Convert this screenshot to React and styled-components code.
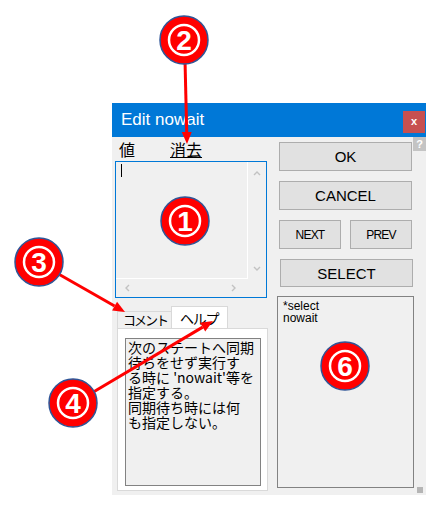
import React from "react";
import styled, { createGlobalStyle } from "styled-components";

const GlobalStyle = createGlobalStyle`
  body {
    margin: 0;
    background: #fff;
    font-family: "Liberation Sans", Arial, sans-serif;
  }
`;

const Stage = styled.div`
  position: relative;
  width: 446px;
  height: 516px;
  padding: 103px 0 0 112px;
  box-sizing: border-box;
  overflow: hidden;
`;

const Window = styled.div`
  width: 314px;
`;

const TitleBar = styled.div`
  height: 34px;
  background: #0078d7;
  display: flex;
  justify-content: space-between;
  padding-left: 9px;
  box-sizing: border-box;
`;

const Title = styled.div`
  color: #fff;
  font-size: 17px;
  line-height: 34px;
`;

const CloseButton = styled.div`
  width: 22px;
  height: 22px;
  margin: 8px 1px 0 0;
  background: #c75050;
  color: #fff;
  font: bold 11px/20px "Liberation Sans", Arial, sans-serif;
  text-align: center;
`;

const Body = styled.div`
  position: relative;
  height: 358px;
  background: #f0f0f0;
  display: flex;
  padding-left: 3px;
  box-sizing: border-box;
`;

const HelpBox = styled.div`
  position: absolute;
  top: 0;
  right: 0;
  width: 13px;
  height: 14px;
  background: #c4c4c4;
  color: #fff;
  font: bold 11px/14px "Liberation Sans", Arial, sans-serif;
  text-align: center;
`;

const Grip = styled.div`
  position: absolute;
  right: 3px;
  bottom: 2px;
  width: 6px;
  height: 6px;
  background-image: radial-gradient(#b5b5b5 0.8px, transparent 1px);
  background-size: 2px 2px;
`;

const LeftColumn = styled.div`
  width: 153px;
  display: flex;
  flex-direction: column;
`;

const LabelRow = styled.div`
  height: 24px;
  display: flex;
  align-items: center;
  padding-left: 4px;
  font: 16px "Noto Sans CJK JP", sans-serif;
  color: #000;
`;

const LinkLabel = styled.span`
  margin-left: 35px;
  text-decoration: underline;
  text-underline-offset: 1px;
`;

const TextBox = styled.div`
  width: 152px;
  height: 137px;
  border: 1px solid #0078d7;
  box-sizing: border-box;
  display: grid;
  grid-template-columns: 1fr 18px;
  grid-template-rows: 1fr 18px;
  background: #f0f0f0;
`;

const EditArea = styled.div`
  border-right: 1px solid #fff;
  border-bottom: 1px solid #fff;
  padding: 2px 0 0 5px;
`;

const Caret = styled.div`
  width: 1px;
  height: 13px;
  background: #000;
`;

const VScroll = styled.div`
  display: flex;
  flex-direction: column;
  justify-content: space-between;
  align-items: center;
  padding: 8px 0 6px;
`;

const HScroll = styled.div`
  display: flex;
  justify-content: space-between;
  align-items: center;
  padding: 0 10px 0 8px;
`;

const Chevron = ({ dir }) => {
  const pts = {
    up: "1,5 4,2 7,5",
    down: "1,2 4,5 7,2",
    left: "5,1 2,4 5,7",
    right: "2,1 5,4 2,7",
  }[dir];
  return (
    <svg width="8" height="8" viewBox="0 0 8 8">
      <polyline points={pts} fill="none" stroke="#c2c2c2" strokeWidth="1.4" />
    </svg>
  );
};

const Tabs = styled.div`
  margin: 8px 0 0 2px;
  height: 22px;
  display: flex;
  align-items: flex-end;
`;

const Tab = styled.div`
  height: ${(p) => (p.$active ? 22 : 17)}px;
  padding: 0 ${(p) => (p.$active ? 9 : 4)}px 0 ${(p) => (p.$active ? 8 : 5)}px;
  background: ${(p) => (p.$active ? "#fff" : "#f0f0f0")};
  border: 1px solid #d9d9d9;
  border-bottom: none;
  box-sizing: border-box;
  font: ${(p) => (p.$active ? 14 : 13)}px "Noto Sans CJK JP", sans-serif;
  letter-spacing: ${(p) => (p.$active ? -1.3 : -2)}px;
  line-height: ${(p) => (p.$active ? 22 : 16)}px;
  color: #000;
  margin-left: ${(p) => (p.$active ? -1 : 0)}px;
`;

const TabPanel = styled.div`
  margin-left: 2px;
  width: 151px;
  height: 163px;
  background: #fff;
  border: 1px solid #d9d9d9;
  border-top-color: #d9d9d9;
  box-sizing: border-box;
  padding: 9px 6px 4px 7px;
`;

const HelpText = styled.div`
  height: 100%;
  border: 1px solid #828282;
  background: #f0f0f0;
  box-sizing: border-box;
  padding: 1px 0 0 2px;
  font: 14px/15px "Noto Sans CJK JP", sans-serif;
  color: #000;
  white-space: nowrap;
  overflow: hidden;
`;

const RightColumn = styled.div`
  margin-left: 9px;
  width: 137px;
  display: flex;
  flex-direction: column;
`;

const Button = styled.div`
  width: ${(p) => p.$w || 133}px;
  height: ${(p) => p.$h || 29}px;
  margin-left: ${(p) => p.$ml ?? 2}px;
  margin-top: ${(p) => p.$mt ?? 10}px;
  background: #e1e1e1;
  border: 1px solid #adadad;
  box-sizing: border-box;
  display: flex;
  align-items: center;
  justify-content: center;
  font-size: ${(p) => (p.$small ? 12 : 15)}px;
  letter-spacing: ${(p) => (p.$small ? -0.8 : 0)}px;
  color: #000;
`;

const ButtonRow = styled.div`
  display: flex;
  gap: 9px;
  margin-left: 2px;
  margin-top: 10px;
`;

const ListBox = styled.div`
  margin-top: 9px;
  width: 137px;
  height: 192px;
  border: 1px solid #828282;
  background: #f0f0f0;
  box-sizing: border-box;
  padding: 3px 0 0 5px;
  font-size: 12px;
  line-height: 12px;
  color: #000;
`;

const Overlay = styled.svg`
  position: absolute;
  left: 0;
  top: 0;
  pointer-events: none;
`;

const RED = "#ff0000";

function Arrow({ x1, y1, x2, y2 }) {
  const a = Math.atan2(y2 - y1, x2 - x1);
  const len = 12;
  const half = 5;
  const bx = x2 - len * Math.cos(a);
  const by = y2 - len * Math.sin(a);
  const px = -Math.sin(a) * half;
  const py = Math.cos(a) * half;
  return (
    <g>
      <line x1={x1} y1={y1} x2={bx} y2={by} stroke={RED} strokeWidth="3" />
      <polygon
        points={`${x2},${y2} ${bx + px},${by + py} ${bx - px},${by - py}`}
        fill={RED}
      />
    </g>
  );
}

function Marker({ cx, cy, n }) {
  return (
    <g>
      <circle cx={cx} cy={cy} r="24" fill={RED} stroke="#2f5597" strokeWidth="1.5" />
      <circle cx={cx} cy={cy} r="15" fill="none" stroke="#fff" strokeWidth="2.5" />
      <text
        x={cx}
        y={cy + 10}
        textAnchor="middle"
        fill="#fff"
        fontFamily="Liberation Sans, Arial, sans-serif"
        fontWeight="bold"
        fontSize="28"
      >
        {n}
      </text>
    </g>
  );
}

const helpLines = [
  "次のステートへ同期",
  "待ちをせず実行す",
  "る時に 'nowait'等を",
  "指定する。",
  "同期待ち時には何",
  "も指定しない。",
];

export default function App() {
  return (
    <>
      <GlobalStyle />
      <Stage>
        <Window>
          <TitleBar>
            <Title>Edit nowait</Title>
            <CloseButton>x</CloseButton>
          </TitleBar>
          <Body>
            <LeftColumn>
              <LabelRow>
                <span>値</span>
                <LinkLabel>消去</LinkLabel>
              </LabelRow>
              <TextBox>
                <EditArea>
                  <Caret />
                </EditArea>
                <VScroll>
                  <Chevron dir="up" />
                  <Chevron dir="down" />
                </VScroll>
                <HScroll>
                  <Chevron dir="left" />
                  <Chevron dir="right" />
                </HScroll>
                <div />
              </TextBox>
              <Tabs>
                <Tab>コメント</Tab>
                <Tab $active>ヘルプ</Tab>
              </Tabs>
              <TabPanel>
                <HelpText>
                  {helpLines.map((l) => (
                    <div key={l}>{l}</div>
                  ))}
                </HelpText>
              </TabPanel>
            </LeftColumn>
            <RightColumn>
              <Button $mt={5}>OK</Button>
              <Button>CANCEL</Button>
              <ButtonRow>
                <Button $w={62} $ml={0} $mt={0} $small>
                  NEXT
                </Button>
                <Button $w={62} $ml={0} $mt={0} $small>
                  PREV
                </Button>
              </ButtonRow>
              <Button $ml={3} $h={28}>
                SELECT
              </Button>
              <ListBox>
                <div>*select</div>
                <div>nowait</div>
              </ListBox>
            </RightColumn>
            <HelpBox>?</HelpBox>
            <Grip />
          </Body>
        </Window>
        <Overlay width="446" height="516" viewBox="0 0 446 516">
          <Arrow x1={185} y1={60} x2={187} y2={144} />
          <Arrow x1={55} y1={272} x2={125} y2={312} />
          <Arrow x1={90} y1={394} x2={213} y2={321} />
          <Marker cx={184} cy={40} n="2" />
          <Marker cx={185} cy={221} n="1" />
          <Marker cx={39} cy={262} n="3" />
          <Marker cx={73} cy={403} n="4" />
          <Marker cx={345} cy={366} n="6" />
        </Overlay>
      </Stage>
    </>
  );
}
